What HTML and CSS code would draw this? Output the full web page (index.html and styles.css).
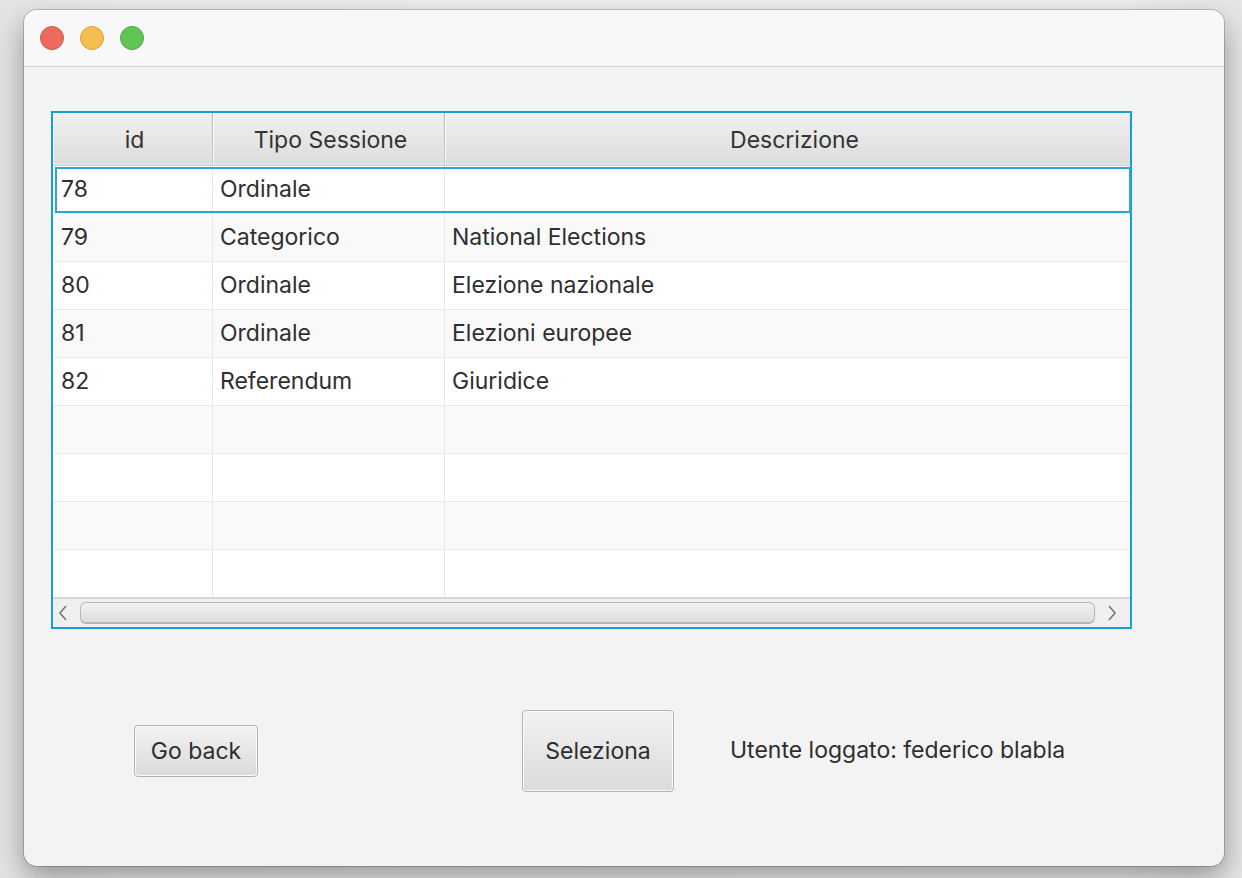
FILE: index.html
```html
<!DOCTYPE html>
<html>
<head>
<meta charset="utf-8">
<link rel="stylesheet" href="styles.css">
</head>
<body>
<div class="window">
  <div class="titlebar">
    <span class="light red"></span>
    <span class="light yellow"></span>
    <span class="light green"></span>
  </div>
  <div class="content">
    <div class="table">
      <div class="header">
        <div class="hcell">id</div>
        <div class="hcell">Tipo Sessione</div>
        <div class="hcell wide">Descrizione</div>
      </div>
      <div class="rows">
        <div class="row focused"><div class="cell">78</div><div class="cell">Ordinale</div><div class="cell"></div></div>
        <div class="row odd"><div class="cell">79</div><div class="cell">Categorico</div><div class="cell">National Elections</div></div>
        <div class="row"><div class="cell">80</div><div class="cell">Ordinale</div><div class="cell">Elezione nazionale</div></div>
        <div class="row odd"><div class="cell">81</div><div class="cell">Ordinale</div><div class="cell">Elezioni europee</div></div>
        <div class="row"><div class="cell">82</div><div class="cell">Referendum</div><div class="cell">Giuridice</div></div>
        <div class="row odd"><div class="cell"></div><div class="cell"></div><div class="cell"></div></div>
        <div class="row"><div class="cell"></div><div class="cell"></div><div class="cell"></div></div>
        <div class="row odd"><div class="cell"></div><div class="cell"></div><div class="cell"></div></div>
        <div class="row last"><div class="cell"></div><div class="cell"></div><div class="cell"></div></div>
      </div>
      <div class="scrollbar">
        <svg class="arrow" width="12" height="18" viewBox="0 0 12 18"><path d="M9 2 L3 9 L9 16" fill="none" stroke="#767676" stroke-width="1.6"/></svg>
        <div class="thumb"></div>
        <svg class="arrow" width="12" height="18" viewBox="0 0 12 18"><path d="M3 2 L9 9 L3 16" fill="none" stroke="#767676" stroke-width="1.6"/></svg>
      </div>
    </div>
    <div class="actions">
      <button class="btn goback">Go back</button>
      <button class="btn select">Seleziona</button>
      <span class="user">Utente loggato: federico blabla</span>
    </div>
  </div>
</div>
</body>
</html>
```

FILE: styles.css
```css
html, body {
  margin: 0;
  padding: 0;
}
body {
  width: 1242px;
  height: 878px;
  overflow: hidden;
  background: linear-gradient(90deg, #e4e4e4 0%, #efefef 10%, #f1f1f1 90%, #e6e6e6 100%);
  font-family: Inter, "Liberation Sans", sans-serif;
  color: #2e2e2e;
}
.window {
  margin: 10px 0 0 24px;
  width: 1200px;
  height: 856px;
  border-radius: 13px;
  background: #f3f3f3;
  box-shadow: 0 0 0 1px rgba(0,0,0,0.18), 0 12px 30px rgba(0,0,0,0.38);
  overflow: hidden;
  display: flex;
  flex-direction: column;
}
.titlebar {
  height: 56px;
  flex: none;
  background: #f8f7f9;
  border-bottom: 1px solid #d3d3d3;
  display: flex;
  align-items: center;
  gap: 16px;
  padding-left: 16px;
}
.light {
  width: 24px;
  height: 24px;
  border-radius: 50%;
  box-sizing: border-box;
}
.red { background: #ed6a5e; border: 1px solid #d65448; }
.yellow { background: #f5bf4f; border: 1px solid #d9a23a; }
.green { background: #61c554; border: 1px solid #4aa83e; }

.content {
  padding: 44px 0 0 27px;
}
.table {
  width: 1081px;
  height: 518px;
  box-sizing: border-box;
  border: 2px solid #149fd6;
  background: #ffffff;
  display: flex;
  flex-direction: column;
}
.header {
  display: grid;
  grid-template-columns: 160px 232px 1fr;
  height: 53px;
  flex: none;
  border-bottom: 1px solid #cfcfcf;
  box-sizing: border-box;
}
.hcell {
  display: flex;
  align-items: center;
  justify-content: center;
  font-size: 23px;
  color: #333;
  background: linear-gradient(#f1f1f1, #dcdcdc);
  border-right: 1px solid #c5c5c5;
  box-shadow: inset 1px 1px 0 #fafafa, inset -1px -2px 0 #e2e2e2;
  padding-top: 1px;
  padding-left: 4px;
}
.hcell.wide { padding-left: 14px; }
.hcell:last-child { border-right: none; }
.rows {
  flex: 1;
  display: flex;
  flex-direction: column;
}
.row {
  display: grid;
  grid-template-columns: 160px 232px 1fr;
  height: 48px;
  box-sizing: border-box;
  border-bottom: 1px solid #ececec;
  background: #ffffff;
  position: relative;
}
.row.odd { background: #f9f9f9; }
.row.last { height: 47px; border-bottom: none; }
.row.focused::after {
  content: "";
  position: absolute;
  left: 2px;
  right: -1px;
  top: 1px;
  bottom: 0;
  border: 2px solid #2aa5d4;
  pointer-events: none;
}
.cell {
  border-right: 1px solid #e8e8e8;
  display: flex;
  align-items: center;
  padding-left: 7px;
  padding-bottom: 2px;
  font-size: 23px;
  color: #2f2f2f;
  white-space: nowrap;
}
.row .cell:first-child { padding-left: 8px; }
.cell:last-child { border-right: none; }
.scrollbar {
  height: 30px;
  flex: none;
  box-sizing: border-box;
  border-top: 2px solid #d6d6d6;
  background: #efefef;
  display: flex;
  align-items: center;
  gap: 11px;
  padding: 0 12px 0 4px;
}
.arrow { flex: none; }
.thumb {
  flex: 1;
  height: 22px;
  box-sizing: border-box;
  border: 1px solid #b6b6b6;
  border-bottom-width: 2px;
  border-radius: 6px;
  background: linear-gradient(#f2f2f2, #dddddd);
}
.actions {
  display: flex;
  align-items: center;
  height: 82px;
  margin-top: 81px;
  padding-left: 83px;
}
.btn {
  font-family: Inter, "Liberation Sans", sans-serif;
  font-size: 23px;
  color: #2e2e2e;
  border: 1.5px solid #b3b3b3;
  border-radius: 4px;
  background: linear-gradient(#f2f2f2, #dbdbdb);
  box-shadow: inset 0 0 0 1px #fafafa;
  padding: 0;
  box-sizing: border-box;
}
.goback {
  width: 124px;
  height: 52px;
}
.select {
  width: 152px;
  height: 82px;
  margin-left: 264px;
}
.user {
  margin-left: 56px;
  font-size: 23px;
  color: #2e2e2e;
  margin-top: -2px;
}
```
